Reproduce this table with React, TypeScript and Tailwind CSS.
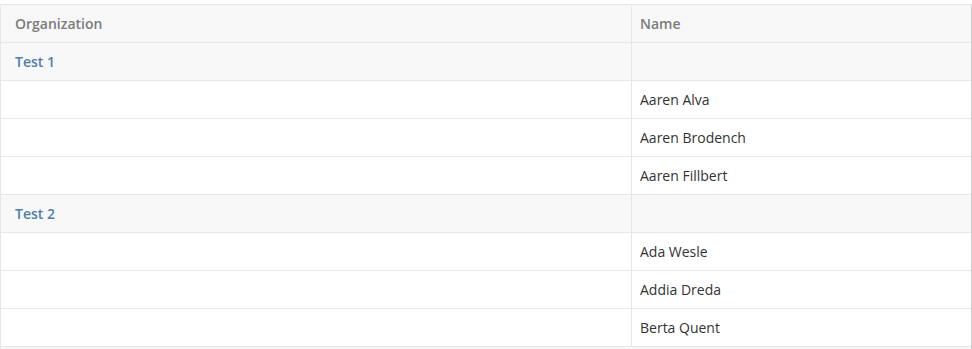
import React from "react";

type Row = { kind: "group"; label: string } | { kind: "item"; name: string };

const rows: Row[] = [
  { kind: "group", label: "Test 1" },
  { kind: "item", name: "Aaren Alva" },
  { kind: "item", name: "Aaren Brodench" },
  { kind: "item", name: "Aaren Fillbert" },
  { kind: "group", label: "Test 2" },
  { kind: "item", name: "Ada Wesle" },
  { kind: "item", name: "Addia Dreda" },
  { kind: "item", name: "Berta Quent" },
];

export default function App() {
  return (
    <div className="w-[972px] bg-white pt-[4px] text-[14px]" style={{ fontFamily: '"Open Sans", sans-serif' }}>
      <div className="border-t border-l border-r border-[#e6e8e8] border-r-[#d0d0d0]">
        <div className="flex h-[38px] border-b border-[#e6e8e8] bg-[#f8f8f8] font-semibold text-[#7b7b7b]">
          <div className="flex w-[631px] items-center border-r border-[#e6e8e8] pl-[14px]">Organization</div>
          <div className="flex flex-1 items-center pl-[8px]">Name</div>
        </div>
        {rows.map((r, i) =>
          r.kind === "group" ? (
            <div key={i} className="flex h-[38px] border-b border-[#e6e8e8] bg-[#f8f8f8]">
              <div className="flex w-[631px] items-center border-r border-[#e6e8e8] pl-[14px] font-semibold text-[#4f7fa8]">
                {r.label}
              </div>
              <div className="flex-1" />
            </div>
          ) : (
            <div key={i} className="flex h-[38px] border-b border-[#e6e8e8] bg-white">
              <div className="w-[631px] border-r border-[#e6e8e8]" />
              <div className="flex flex-1 items-center pl-[8px] text-[#333333]">{r.name}</div>
            </div>
          )
        )}
        <div className="h-[3px] bg-[#f8f8f8]" />
      </div>
    </div>
  );
}
